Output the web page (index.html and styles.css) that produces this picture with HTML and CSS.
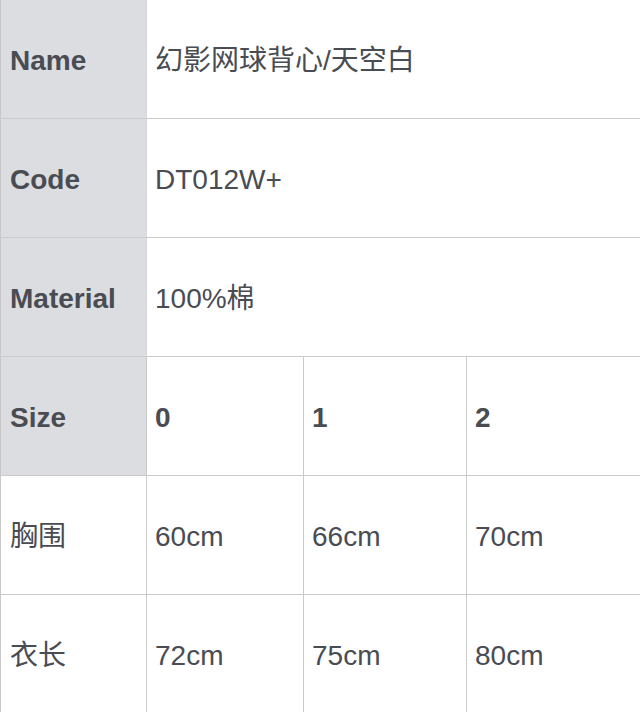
FILE: index.html
```html
<!DOCTYPE html>
<html lang="zh">
<head>
<meta charset="utf-8">
<title>Spec</title>
<link rel="stylesheet" href="styles.css">
</head>
<body>
<div class="sheet">
  <div class="cell label head">Name</div>
  <div class="cell value wide">幻影网球背心/天空白</div>

  <div class="cell label head">Code</div>
  <div class="cell value wide">DT012W+</div>

  <div class="cell label head">Material</div>
  <div class="cell value wide">100%棉</div>

  <div class="cell label head solid">Size</div>
  <div class="cell value strong col">0</div>
  <div class="cell value strong col">1</div>
  <div class="cell value strong">2</div>

  <div class="cell label solid">胸围</div>
  <div class="cell value col">60cm</div>
  <div class="cell value col">66cm</div>
  <div class="cell value">70cm</div>

  <div class="cell label solid">衣长</div>
  <div class="cell value col">72cm</div>
  <div class="cell value col">75cm</div>
  <div class="cell value">80cm</div>
</div>
</body>
</html>
```
FILE: styles.css
```css
html, body {
  margin: 0;
  padding: 0;
  background: #ffffff;
}

body {
  font-family: "Liberation Sans", "Noto Sans CJK SC", sans-serif;
  color: #494c53;
}

.sheet {
  display: grid;
  grid-template-columns: 146px 157px 163px 1fr;
  grid-auto-rows: 119px;
  border-left: 1px solid #c8c8c8;
  width: 639px;
}

.cell {
  box-sizing: border-box;
  display: flex;
  align-items: center;
  padding-top: 4px;
  border-bottom: 1px solid #cbcbcb;
  font-size: 28px;
  line-height: 1;
  white-space: nowrap;
  overflow: hidden;
}

.label {
  padding-left: 9px;
  border-right: 1px dotted #d2d3d6;
}

.head {
  background: #dcdde0;
  font-weight: bold;
}

.label.solid {
  border-right: 1px solid #cbcbcb;
}

.value {
  padding-left: 8px;
}

.wide {
  grid-column: span 3;
}

.col {
  border-right: 1px solid #cbcbcb;
}

.strong {
  font-weight: bold;
}
```
